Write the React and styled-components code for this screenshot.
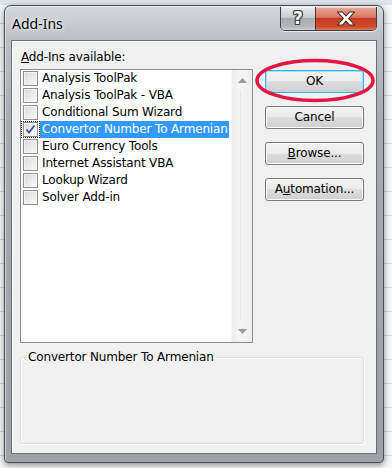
import React from 'react';
import styled, { createGlobalStyle } from 'styled-components';

const GlobalStyle = createGlobalStyle`
  html, body {
    margin: 0;
    padding: 0;
    background: #f3f5f7;
  }
  * {
    box-sizing: border-box;
  }
`;

// Excel sheet peeking out behind the dialog
const Desktop = styled.div`
  width: 392px;
  height: 468px;
  padding: 5px 8px 5px 4px;
  overflow: hidden;
  background-color: #f6f7f8;
  background-image:
    linear-gradient(to bottom, #dfe4ea 0, #dfe4ea 5px, transparent 5px),
    repeating-linear-gradient(to bottom, transparent 0, transparent 23px, #d2d8df 23px, #d2d8df 24px);
  font-family: 'DejaVu Sans', 'Liberation Sans', sans-serif;
`;

const Window = styled.div`
  width: 380px;
  height: 458px;
  display: flex;
  flex-direction: column;
  border: 1px solid #4c4f53;
  border-radius: 7px 7px 4px 4px;
  background: linear-gradient(to bottom, #d4d8dc 0, #bcc0c4 34px, #a7abaf 120px, #9ea2a6 100%);
  box-shadow: 0 2px 6px rgba(0, 0, 0, 0.45), inset 1px 1px 0 rgba(255, 255, 255, 0.5);
  padding: 0 6px 8px 6px;
`;

const TitleBar = styled.div`
  height: 34px;
  flex-shrink: 0;
  display: flex;
  justify-content: space-between;
  align-items: flex-start;
  padding-left: 1px;
`;

const Title = styled.div`
  margin-top: 9px;
  font-family: 'Noto Sans', 'Open Sans', sans-serif;
  font-size: 14px;
  line-height: 18px;
  color: #000;
  text-shadow: 0 0 6px rgba(255, 255, 255, 0.9), 0 0 3px rgba(255, 255, 255, 0.9);
`;

const CaptionButtons = styled.div`
  display: flex;
  margin-top: 1px;
  border: 1px solid #3e4247;
  border-top: none;
  border-radius: 0 0 5px 5px;
  overflow: hidden;
  box-shadow: 0 1px 0 rgba(255, 255, 255, 0.6);
`;

const CaptionButton = styled.div`
  width: ${(p) => p.$width}px;
  height: 23px;
  display: flex;
  align-items: center;
  justify-content: center;
  background: ${(p) =>
    p.$danger
      ? 'linear-gradient(to bottom, #e9a99a 0, #d9755f 45%, #c33a1f 50%, #cf4a2c 85%, #e07a52 100%)'
      : 'linear-gradient(to bottom, #e8ebee 0, #c9cdd1 45%, #a8acb0 50%, #b3b7bb 85%, #cdd1d5 100%)'};
  border-left: ${(p) => (p.$danger ? '1px solid #4a3430' : 'none')};
  box-shadow: inset 0 1px 0 rgba(255, 255, 255, 0.5);
`;

const HelpGlyph = styled.span`
  font-family: 'DejaVu Sans', sans-serif;
  font-weight: bold;
  font-size: 17px;
  line-height: 1;
  color: #fff;
  text-shadow: -1px 0 #3a3d40, 1px 0 #3a3d40, 0 -1px #3a3d40, 0 1px #3a3d40,
    -1px -1px #3a3d40, 1px 1px #3a3d40, -1px 1px #3a3d40, 1px -1px #3a3d40;
`;

const Client = styled.div`
  flex: 1;
  display: flex;
  flex-direction: column;
  background: #f0f0f0;
  border: 1px solid #6a6d70;
  box-shadow: inset 1px 1px 0 #ffffff;
  padding: 9px 11px 9px 8px;
  color: #000;
  font-size: 12px;
  letter-spacing: -0.15px;
`;

const Label = styled.div`
  line-height: 15px;
  height: 15px;
  margin-bottom: 4px;
  padding-left: 1px;
`;

const Key = styled.span`
  text-decoration: underline;
`;

const Body = styled.div`
  display: grid;
  grid-template-columns: 233px 99px;
  column-gap: 12px;
  align-items: start;
`;

const ListBox = styled.div`
  height: 274px;
  display: flex;
  border: 1px solid #8b8e92;
  background: #fff;
`;

const Items = styled.div`
  flex: 1;
  display: flex;
  flex-direction: column;
  padding-right: 2px;
`;

const Row = styled.div`
  height: 17px;
  display: flex;
  align-items: stretch;
`;

const CheckCell = styled.div`
  width: 19px;
  display: flex;
  align-items: center;
  justify-content: center;
  border: 1px dotted ${(p) => (p.$focused ? '#222' : 'transparent')};
`;

const Box = styled.div`
  width: 15px;
  height: 15px;
  display: flex;
  align-items: center;
  justify-content: center;
  border: 1px solid #8f8f8f;
  background: linear-gradient(135deg, #d8d8d8 0, #ececec 55%, #fafafa 100%);
  box-shadow: inset 0 0 0 1px #f4f4f4;
`;

const ItemText = styled.div`
  flex: 1;
  padding-left: 2px;
  line-height: 17px;
  white-space: nowrap;
  color: ${(p) => (p.$selected ? '#fff' : '#000')};
  background: ${(p) => (p.$selected ? '#3399ff' : 'transparent')};
`;

const ScrollBar = styled.div`
  width: 21px;
  display: flex;
  flex-direction: column;
  background: linear-gradient(to right, #ececec 0, #f4f4f4 40%, #eeeeee 100%);
  border-left: 1px solid #f7f7f7;
`;

const ScrollArrow = styled.div`
  height: 21px;
  display: flex;
  align-items: center;
  justify-content: center;
`;

const ScrollTrack = styled.div`
  flex: 1;
  background: linear-gradient(to right, transparent 0, transparent 8px, #e6e6e6 8px, #e6e6e6 9px, transparent 9px);
`;

const Buttons = styled.div`
  margin-top: 1px;
  display: flex;
  flex-direction: column;
  gap: 13px;
`;

const ButtonWrap = styled.div`
  position: relative;
`;

const Button = styled.div`
  height: 23px;
  display: flex;
  align-items: center;
  justify-content: center;
  border: 1px solid ${(p) => (p.$default ? '#3ab0e6' : '#7a7a7a')};
  border-radius: 3px;
  background: linear-gradient(to bottom, #f2f2f2 0, #ebebeb 50%, #dddddd 50%, #cfcfcf 100%);
  box-shadow: inset 0 0 0 1px ${(p) => (p.$default ? '#9fe0fa' : '#fbfbfb')};
  line-height: 15px;
`;

const Highlight = styled.svg`
  position: absolute;
  left: -11px;
  top: -12px;
  pointer-events: none;
`;

const GroupBox = styled.fieldset`
  flex: 1;
  margin: 7px 0 0 0;
  padding: 0;
  width: 344px;
  border: 1px solid #d5dfe5;
  border-radius: 3px;
  box-shadow: inset 1px 1px 0 #fff, 1px 1px 0 #fff;
  min-inline-size: 0;
`;

const Legend = styled.legend`
  margin-left: 5px;
  padding: 0 2px;
  line-height: 15px;
  font-size: 12px;
`;

const addIns = [
  { name: 'Analysis ToolPak', checked: false },
  { name: 'Analysis ToolPak - VBA', checked: false },
  { name: 'Conditional Sum Wizard', checked: false },
  { name: 'Convertor Number To Armenian', checked: true, selected: true },
  { name: 'Euro Currency Tools', checked: false },
  { name: 'Internet Assistant VBA', checked: false },
  { name: 'Lookup Wizard', checked: false },
  { name: 'Solver Add-in', checked: false },
];

const Check = () => (
  <svg width="11" height="11" viewBox="0 0 11 11">
    <path d="M1.5 5.5 L4 8.5 L9.5 1.5" fill="none" stroke="#3c5490" strokeWidth="1.8" />
  </svg>
);

const Arrow = ({ up }) => (
  <svg width="9" height="5" viewBox="0 0 9 5">
    <path d={up ? 'M0 5 L4.5 0 L9 5 Z' : 'M0 0 L9 0 L4.5 5 Z'} fill="#9a9a9a" />
  </svg>
);

const CloseIcon = () => (
  <svg width="20" height="15" viewBox="0 0 20 15">
    <path
      d="M1.5 1 H6.5 L10 5 L13.5 1 H18.5 L12.6 7.5 L18.5 14 H13.5 L10 10 L6.5 14 H1.5 L7.4 7.5 Z"
      fill="#ffffff"
      stroke="#3b2a26"
      strokeWidth="1.1"
      strokeLinejoin="round"
    />
  </svg>
);

export default function App() {
  return (
    <>
      <GlobalStyle />
      <Desktop>
        <Window>
          <TitleBar>
            <Title>Add-Ins</Title>
            <CaptionButtons>
              <CaptionButton $width={34}>
                <HelpGlyph>?</HelpGlyph>
              </CaptionButton>
              <CaptionButton $width={61} $danger>
                <CloseIcon />
              </CaptionButton>
            </CaptionButtons>
          </TitleBar>

          <Client>
            <Label>
              <Key>A</Key>dd-Ins available:
            </Label>
            <Body>
              <ListBox>
                <Items>
                  {addIns.map((item) => (
                    <Row key={item.name}>
                      <CheckCell $focused={item.selected}>
                        <Box>{item.checked && <Check />}</Box>
                      </CheckCell>
                      <ItemText $selected={item.selected}>{item.name}</ItemText>
                    </Row>
                  ))}
                </Items>
                <ScrollBar>
                  <ScrollArrow>
                    <Arrow up />
                  </ScrollArrow>
                  <ScrollTrack />
                  <ScrollArrow>
                    <Arrow />
                  </ScrollArrow>
                </ScrollBar>
              </ListBox>

              <Buttons>
                <ButtonWrap>
                  <Button $default>OK</Button>
                  {/* red annotation circled around the OK button */}
                  <Highlight width="122" height="47" viewBox="0 0 122 47">
                    <ellipse cx="61" cy="22.5" rx="58" ry="20" fill="none" stroke="#e2163f" strokeWidth="3.5" />
                  </Highlight>
                </ButtonWrap>
                <Button>Cancel</Button>
                <Button>
                  <span>
                    <Key>B</Key>rowse...
                  </span>
                </Button>
                <Button>
                  <span>
                    A<Key>u</Key>tomation...
                  </span>
                </Button>
              </Buttons>
            </Body>

            <GroupBox>
              <Legend>Convertor Number To Armenian</Legend>
            </GroupBox>
          </Client>
        </Window>
      </Desktop>
    </>
  );
}
